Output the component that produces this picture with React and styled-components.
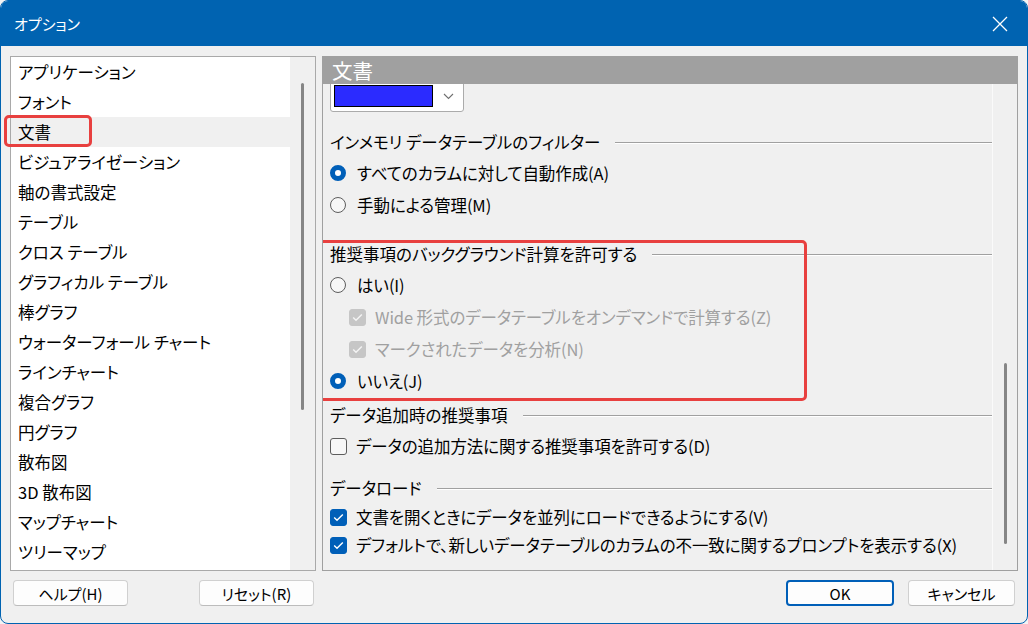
import React from "react"
import styled, { createGlobalStyle } from "styled-components"

const GlobalStyle = createGlobalStyle`
  html, body {
    margin: 0;
    padding: 0;
    background: #f3f3f3;
  }
  body {
    font-family: "Noto Sans CJK JP", "Noto Sans", sans-serif;
    font-feature-settings: "palt";
    color: #000;
  }
`

const Window = styled.div`
  width: 1028px;
  height: 624px;
  box-sizing: border-box;
  border: 1px solid #0063b1;
  border-radius: 8px;
  overflow: hidden;
  background: #f0f0f0;
  display: flex;
  flex-direction: column;
`

const TitleBar = styled.div`
  height: 45px;
  flex: none;
  background: #0063b1;
  display: flex;
  align-items: center;
  justify-content: space-between;
  padding: 0 18px 0 13px;
`

const Title = styled.div`
  color: #fff;
  font-size: 15px;
  line-height: 1;
`

const CloseButton = styled.div`
  width: 18px;
  height: 18px;
  display: flex;
  align-items: center;
  justify-content: center;
`

const Body = styled.div`
  flex: 1;
  display: flex;
  flex-direction: column;
  padding: 10px 9px 17px 9px;
  min-height: 0;
`

const Panes = styled.div`
  flex: 1;
  display: flex;
  gap: 6px;
  min-height: 0;
`

const ListBox = styled.div`
  width: 306px;
  box-sizing: border-box;
  border: 1px solid #a9a9a9;
  background: #fff;
  display: flex;
`

const ListItems = styled.div`
  flex: 1;
  display: flex;
  flex-direction: column;
`

const ListItem = styled.div`
  position: relative;
  height: 30px;
  display: flex;
  align-items: center;
  padding-left: 7px;
  font-size: 16.5px;
  background: ${p => (p.$selected ? "#f0f0f0" : "transparent")};
`

const Highlight = styled.div`
  position: absolute;
  left: ${p => p.$left}px;
  top: ${p => p.$top}px;
  width: ${p => p.$w}px;
  height: ${p => p.$h}px;
  box-sizing: border-box;
  border: 3px solid #e8403f;
  border-radius: 5px;
  pointer-events: none;
`

const Track = styled.div`
  width: 25px;
  flex: none;
  background: #f0f0f0;
  display: flex;
  justify-content: center;
  padding-top: ${p => p.$offset}px;
  box-sizing: border-box;
  border-left: ${p => (p.$edge ? "1px solid #fafafa" : "none")};
`

const Thumb = styled.div`
  width: 3px;
  height: ${p => p.$len}px;
  border-radius: 2px;
  background: #868686;
`

const Panel = styled.div`
  flex: 1;
  box-sizing: border-box;
  border: 1px solid #a0a0a0;
  display: flex;
  flex-direction: column;
  min-width: 0;
`

const PanelHeader = styled.div`
  height: 27px;
  flex: none;
  background: #a0a0a0;
  color: #fff;
  font-size: 20.5px;
  line-height: 27px;
  padding-left: 9px;
`

const PanelBody = styled.div`
  flex: 1;
  display: flex;
  min-height: 0;
`

const Scroller = styled.div`
  flex: 1;
  overflow: hidden;
  padding-left: 7px;
`

const Dropdown = styled.div`
  width: 134px;
  height: 30px;
  margin-top: -2px;
  box-sizing: border-box;
  border: 1px solid #ababab;
  border-radius: 0 0 3px 3px;
  background: #fff;
  display: flex;
  align-items: flex-start;
  padding: 2px 0 0 3px;
`

const Swatch = styled.div`
  width: 99px;
  height: 22px;
  box-sizing: border-box;
  border: 1px solid #000;
  background: ${p => p.$color};
`

const Chevron = styled.div`
  flex: 1;
  height: 22px;
  display: flex;
  align-items: center;
  justify-content: center;
`

const Section = styled.div`
  position: relative;
  margin-top: ${p => p.$gap}px;
`

const SectionHeader = styled.div`
  height: 30px;
  display: flex;
  align-items: center;
  font-size: 16.5px;
  &::after {
    content: "";
    flex: 1;
    height: 1px;
    margin-left: 15px;
    background: #a0a0a0;
    box-shadow: 0 1px 0 #fff;
  }
`

const Row = styled.div`
  height: ${p => p.$h || 32}px;
  display: flex;
  align-items: center;
  padding-left: ${p => (p.$indent ? 19 : 0)}px;
  font-size: 16.5px;
  letter-spacing: -0.1px;
  color: ${p => (p.$disabled ? "#a0a0a0" : "#000")};
`

const RadioMark = styled.span`
  width: 16px;
  height: 16px;
  box-sizing: border-box;
  border-radius: 50%;
  flex: none;
  margin-right: 11px;
  border: ${p => (p.$on ? "5px solid #005fb8" : "1px solid #5d5d5d")};
  background: ${p => (p.$on ? "#fff" : "#f7f7f7")};
`

const BoxMark = styled.span`
  width: 17px;
  height: 17px;
  box-sizing: border-box;
  border-radius: 3px;
  flex: none;
  margin-right: 9px;
  display: flex;
  align-items: center;
  justify-content: center;
  border: 1px solid ${p => (p.$disabled ? "#c6c6c6" : p.$on ? "#005fb8" : "#5d5d5d")};
  background: ${p => (p.$disabled ? "#c6c6c6" : p.$on ? "#005fb8" : "#f7f7f7")};
`

const ButtonBar = styled.div`
  height: 26px;
  margin-top: 9px;
  flex: none;
  display: flex;
  justify-content: space-between;
`

const LeftButtons = styled.div`
  width: 306px;
  box-sizing: border-box;
  padding: 0 2px 0 3px;
  display: flex;
  justify-content: space-between;
`

const RightButtons = styled.div`
  display: flex;
  gap: 14px;
  padding-right: 3px;
`

const Button = styled.button`
  width: ${p => p.$w}px;
  height: 26px;
  box-sizing: border-box;
  font-family: inherit;
  font-feature-settings: "palt";
  font-size: 15px;
  color: #000;
  background: #fdfdfd;
  border: ${p => (p.$primary ? "2px solid #005fb8" : "1px solid #d0d0d0")};
  border-bottom-color: ${p => (p.$primary ? "#005fb8" : "#bcbcbc")};
  border-radius: 4px;
  padding: 0;
  display: flex;
  align-items: center;
  justify-content: center;
`

const categories = [
  "アプリケーション",
  "フォント",
  "文書",
  "ビジュアライゼーション",
  "軸の書式設定",
  "テーブル",
  "クロス テーブル",
  "グラフィカル テーブル",
  "棒グラフ",
  "ウォーターフォール チャート",
  "ラインチャート",
  "複合グラフ",
  "円グラフ",
  "散布図",
  "3D 散布図",
  "マップチャート",
  "ツリーマップ",
]

const Check = ({ color = "#fff" }) => (
  <svg width="11" height="9" viewBox="0 0 11 9">
    <path d="M1.2 4.6 L4 7.3 L9.8 1.4" fill="none" stroke={color} strokeWidth="1.4" />
  </svg>
)

const Radio = ({ on, children, h }) => (
  <Row $h={h}>
    <RadioMark $on={on} />
    {children}
  </Row>
)

const CheckBox = ({ on, disabled, indent, children, h }) => (
  <Row $h={h} $indent={indent} $disabled={disabled}>
    <BoxMark $on={on} $disabled={disabled}>
      {on && <Check color={disabled ? "#f4f4f4" : "#fff"} />}
    </BoxMark>
    {children}
  </Row>
)

export default function App() {
  return (
    <>
      <GlobalStyle />
      <Window>
        <TitleBar>
          <Title>オプション</Title>
          <CloseButton>
            <svg width="16" height="16" viewBox="0 0 16 16">
              <path d="M1 1 L15 15 M15 1 L1 15" stroke="#fff" strokeWidth="1.3" />
            </svg>
          </CloseButton>
        </TitleBar>
        <Body>
          <Panes>
            <ListBox>
              <ListItems>
                {categories.map(name => (
                  <ListItem key={name} $selected={name === "文書"}>
                    {name}
                    {name === "文書" && <Highlight $left={-7} $top={-2} $w={88} $h={32} />}
                  </ListItem>
                ))}
              </ListItems>
              <Track $offset={26}>
                <Thumb $len={327} />
              </Track>
            </ListBox>
            <Panel>
              <PanelHeader>文書</PanelHeader>
              <PanelBody>
                <Scroller>
                  <Dropdown>
                    <Swatch $color="#2b2bff" />
                    <Chevron>
                      <svg width="11" height="7" viewBox="0 0 11 7">
                        <path d="M1 1 L5.5 5.5 L10 1" fill="none" stroke="#707070" strokeWidth="1.1" />
                      </svg>
                    </Chevron>
                  </Dropdown>

                  <Section $gap={15}>
                    <SectionHeader>インメモリ データテーブルのフィルター</SectionHeader>
                    <Radio on>すべてのカラムに対して自動作成(A)</Radio>
                    <Radio>手動による管理(M)</Radio>
                  </Section>

                  <Section $gap={18}>
                    <SectionHeader>推奨事項のバックグラウンド計算を許可する</SectionHeader>
                    <Radio>はい(I)</Radio>
                    <CheckBox on disabled indent>Wide 形式のデータテーブルをオンデマンドで計算する(Z)</CheckBox>
                    <CheckBox on disabled indent>マークされたデータを分析(N)</CheckBox>
                    <Radio on>いいえ(J)</Radio>
                    <Highlight $left={-12} $top={1} $w={489} $h={161} />
                  </Section>

                  <Section $gap={3}>
                    <SectionHeader>データ追加時の推奨事項</SectionHeader>
                    <CheckBox>データの追加方法に関する推奨事項を許可する(D)</CheckBox>
                  </Section>

                  <Section $gap={11}>
                    <SectionHeader>データロード</SectionHeader>
                    <CheckBox on h={28}>文書を開くときにデータを並列にロードできるようにする(V)</CheckBox>
                    <CheckBox on h={28}>デフォルトで、新しいデータテーブルのカラムの不一致に関するプロンプトを表示する(X)</CheckBox>
                  </Section>
                </Scroller>
                <Track $offset={279} $edge>
                  <Thumb $len={181} />
                </Track>
              </PanelBody>
            </Panel>
          </Panes>
          <ButtonBar>
            <LeftButtons>
              <Button $w={115}>ヘルプ(H)</Button>
              <Button $w={115}>リセット(R)</Button>
            </LeftButtons>
            <RightButtons>
              <Button $w={108} $primary>OK</Button>
              <Button $w={107}>キャンセル</Button>
            </RightButtons>
          </ButtonBar>
        </Body>
      </Window>
    </>
  )
}
